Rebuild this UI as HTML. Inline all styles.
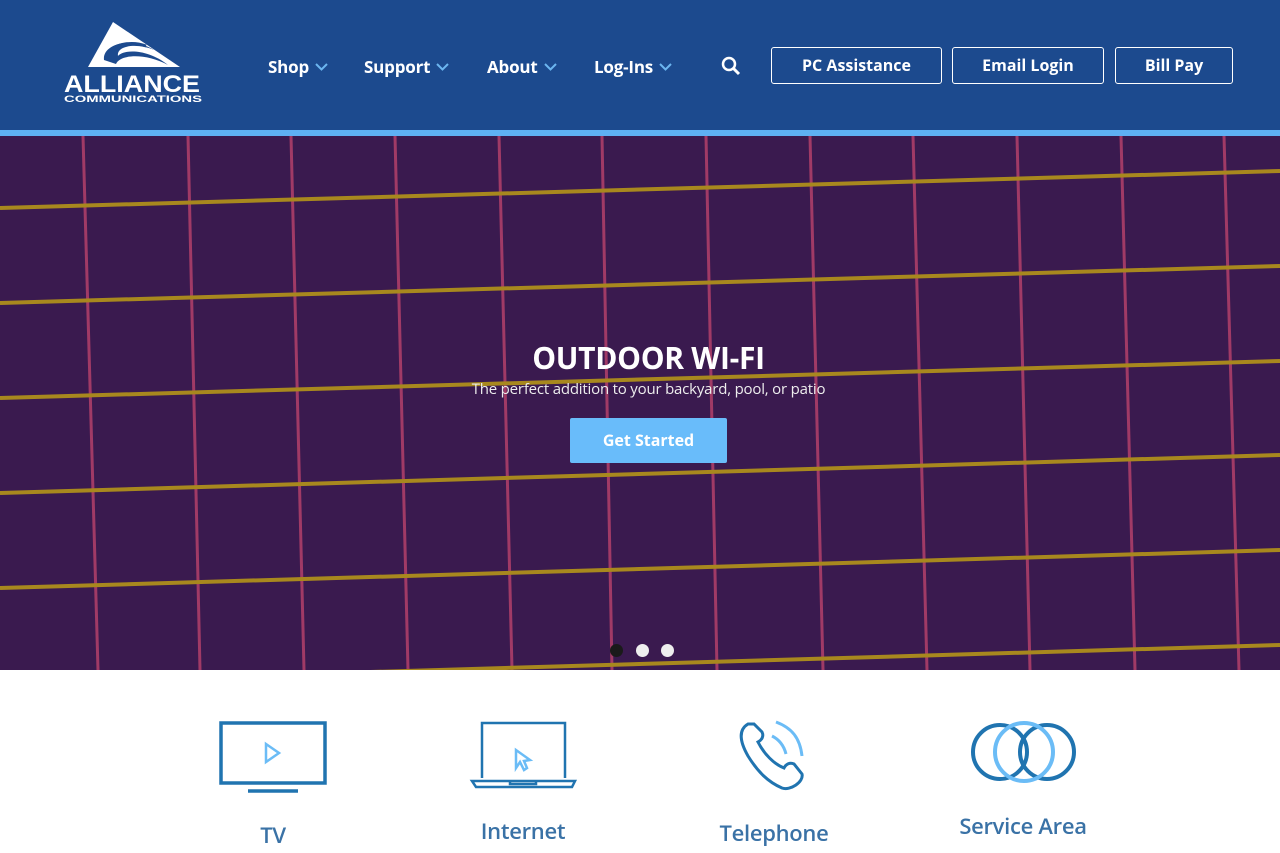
<!DOCTYPE html>
<html><head><meta charset="utf-8"><style>
*{margin:0;padding:0;box-sizing:border-box}
body{width:1280px;height:853px;overflow:hidden;background:#fff;font-family:"Open Sans","Liberation Sans",sans-serif}
.hdr{position:absolute;left:0;top:0;width:1280px;height:130px;background:#1c4a8e}
.strip{position:absolute;left:0;top:130px;width:1280px;height:6px;background:#5eb1f3}
.nav{position:absolute;top:55px;color:#fff;font-weight:bold;font-size:17px;letter-spacing:-0.2px}
.nav svg{margin-left:6px;vertical-align:2px}
.btn{position:absolute;top:47px;height:37px;border:1.5px solid #fff;border-radius:3px;color:#fff;font-weight:bold;font-size:16px;text-align:center;line-height:34px}
.hero{position:absolute;left:0;top:136px;width:1280px;height:534px;background:#3a1a4f;overflow:hidden}
.lbl{position:absolute;color:#3a72a6;font-size:22px;text-align:center;width:200px;font-weight:600;letter-spacing:-0.3px}
</style></head><body>
<div class="hdr">
<svg style="position:absolute;left:60px;top:18px" width="150" height="90" viewBox="0 0 150 90">
<polygon points="53,4 28,49 120,49" fill="#fff"/>
<path d="M44,42 C42,26 72,18 94,32 C78,25 56,27 58,38 C64,31 88,31 108,47 C86,35 60,36 56,46 Z" fill="#1c4a8e"/>
<path d="M50,33 C56,26 72,23 86,28" stroke="#1c4a8e" stroke-width="3" fill="none"/>
<text x="4" y="74" fill="#fff" font-family="Liberation Sans,sans-serif" font-size="24" font-weight="bold" textLength="136" lengthAdjust="spacingAndGlyphs">ALLIANCE</text>
<text x="4" y="84" fill="#fff" font-family="Liberation Sans,sans-serif" font-size="9" font-weight="bold" textLength="138" lengthAdjust="spacingAndGlyphs">COMMUNICATIONS</text>
</svg>
<div class="nav" style="left:268px">Shop<svg width="13" height="8"><path d="M1,1 6.5,6.5 12,1" stroke="#6cb6f0" stroke-width="2" fill="none"/></svg></div>
<div class="nav" style="left:364px">Support<svg width="13" height="8"><path d="M1,1 6.5,6.5 12,1" stroke="#6cb6f0" stroke-width="2" fill="none"/></svg></div>
<div class="nav" style="left:487px">About<svg width="13" height="8"><path d="M1,1 6.5,6.5 12,1" stroke="#6cb6f0" stroke-width="2" fill="none"/></svg></div>
<div class="nav" style="left:594px">Log-Ins<svg width="13" height="8"><path d="M1,1 6.5,6.5 12,1" stroke="#6cb6f0" stroke-width="2" fill="none"/></svg></div>
<svg style="position:absolute;left:721px;top:56px" width="20" height="20"><circle cx="8" cy="8" r="6" stroke="#fff" stroke-width="2.5" fill="none"/><path d="M12.5,12.5 18,18" stroke="#fff" stroke-width="3"/></svg>
<div class="btn" style="left:771px;width:171px">PC Assistance</div>
<div class="btn" style="left:952px;width:152px">Email Login</div>
<div class="btn" style="left:1115px;width:118px">Bill Pay</div>
</div>
<div class="strip"></div>
<div class="hero">
<svg width="1280" height="534" style="position:absolute;left:0;top:0">
<g stroke="#a03a66" stroke-width="3">
<line x1="83" y1="0" x2="98" y2="534"/><line x1="188" y1="0" x2="200" y2="534"/><line x1="291" y1="0" x2="304" y2="534"/><line x1="395" y1="0" x2="408" y2="534"/><line x1="499" y1="0" x2="512" y2="534"/><line x1="602" y1="0" x2="612" y2="534"/><line x1="706" y1="0" x2="717" y2="534"/><line x1="810" y1="0" x2="823" y2="534"/><line x1="913" y1="0" x2="927" y2="534"/><line x1="1017" y1="0" x2="1030" y2="534"/><line x1="1121" y1="0" x2="1135" y2="534"/><line x1="1224" y1="0" x2="1239" y2="534"/>
</g>
<g stroke="#a8881e" stroke-width="4">
<line x1="0" y1="72" x2="1280" y2="35"/><line x1="0" y1="167" x2="1280" y2="130"/><line x1="0" y1="262" x2="1280" y2="225"/><line x1="0" y1="357" x2="1280" y2="319"/><line x1="0" y1="452" x2="1280" y2="414"/><line x1="0" y1="547" x2="1280" y2="509"/>
</g>
</svg>
<div style="position:absolute;left:0;width:1280px;top:201px;text-align:center;color:#fff;font-weight:bold;font-size:30px;padding-left:17px;letter-spacing:-0.3px">OUTDOOR WI-FI</div>
<div style="position:absolute;left:0;width:1280px;top:243px;text-align:center;color:#eee;font-size:15px;padding-left:17px;letter-spacing:-0.2px">The perfect addition to your backyard, pool, or patio</div>
<div style="position:absolute;left:570px;top:282px;width:157px;height:45px;background:#69bcfa;border-radius:2px;color:#fff;font-weight:bold;font-size:16px;text-align:center;line-height:45px">Get Started</div>
<div style="position:absolute;left:610px;top:508px;width:13px;height:13px;border-radius:50%;background:#1a1a1a"></div>
<div style="position:absolute;left:636px;top:508px;width:13px;height:13px;border-radius:50%;background:#eee"></div>
<div style="position:absolute;left:661px;top:508px;width:13px;height:13px;border-radius:50%;background:#eee"></div>
</div>
<svg width="1280" height="183" style="position:absolute;left:0;top:670px">
<g fill="none" stroke-width="3.5">
<rect x="221" y="53" width="104" height="60" stroke="#2074b0"/>
<line x1="248" y1="121" x2="298" y2="121" stroke="#2074b0"/>
<path d="M266,74 L279,83 266,92 Z" stroke="#6bbcf6" stroke-width="2.5"/>
<path d="M482,108 V53 H565 V108" stroke="#2074b0" stroke-width="2.5"/>
<path d="M472,111 H575 L572,117 H476 Z M510,111 v3 h26 v-3" stroke="#2074b0" stroke-width="2.5"/>
<path d="M516,80 V98 L520,92 524,100 527,98 524,91 530,90 Z" stroke="#6bbcf6" stroke-width="2.5"/>
<path d="M748,54 C738,60 740,72 748,86 C758,102 768,112 782,118 C790,121 804,112 802,104 L794,94 C790,92 786,94 784,98 C774,94 764,84 758,72 C762,70 764,66 762,62 L754,54 Z" stroke="#2074b0" stroke-width="3"/>
<path d="M772,66 C780,70 784,76 786,84" stroke="#6bbcf6" stroke-width="3"/>
<path d="M776,52 C792,58 800,68 802,86" stroke="#6bbcf6" stroke-width="3"/>
<circle cx="1000" cy="82" r="27" stroke="#2074b0" stroke-width="4"/>
<circle cx="1047" cy="82" r="27" stroke="#2074b0" stroke-width="4"/>
<circle cx="1024" cy="82" r="29" stroke="#6bbcf6" stroke-width="4"/>
</g>
</svg>
<div class="lbl" style="left:173px;top:820px">TV</div>
<div class="lbl" style="left:423px;top:816px">Internet</div>
<div class="lbl" style="left:674px;top:818px">Telephone</div>
<div class="lbl" style="left:923px;top:811px">Service Area</div>
</body></html>
